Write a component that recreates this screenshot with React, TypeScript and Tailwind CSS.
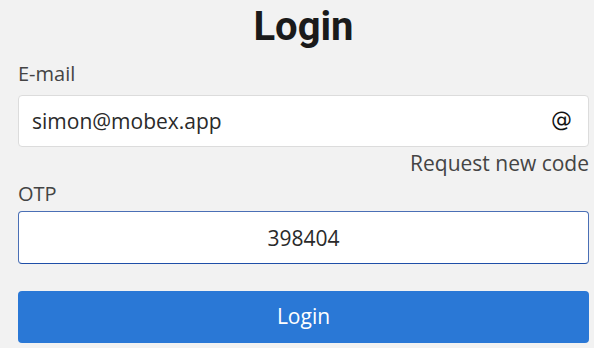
import React, { useState } from 'react';

export default function App() {
    const [email, setEmail] = useState('simon@mobex.app');
    const [otp, setOtp] = useState('398404');

    return (
        <div className="min-h-screen bg-[#f2f2f2] pr-[5px] pl-[18px] font-['Open_Sans',sans-serif] text-[#333]">
            <div className="w-[571px]">
                <h1 className="pt-[3px] text-center font-['Roboto',sans-serif] text-[40px] leading-[48px] font-bold text-[#1a1a1a]">Login</h1>

                <label className="mt-[10px] block text-[20px] leading-[26px] text-[#444]">E-mail</label>
                <div className="relative mt-[8px]">
                    <input
                        type="email"
                        value={email}
                        onChange={(e) => setEmail(e.target.value)}
                        className="h-[52px] w-full rounded-[4px] border border-[#dcdcdc] bg-white pr-[44px] pl-[13px] text-[21px] text-[#2a2a2a] outline-none"
                    />
                    <span className="absolute top-1/2 right-[17px] -translate-y-1/2 font-['DejaVu_Sans',sans-serif] text-[21px] text-[#111]">@</span>
                </div>
                <div className="mt-[2px] text-right text-[21px] leading-[28px] text-[#444]">Request new code</div>

                <label className="mt-[4px] block text-[20px] leading-[26px] text-[#444]">OTP</label>
                <input
                    type="text"
                    value={otp}
                    onChange={(e) => setOtp(e.target.value)}
                    className="mt-[4px] block h-[53px] w-full rounded-[4px] border border-[#4a6fb5] border-b-[#1f4fa8] bg-white text-center text-[21px] text-[#2a2a2a] outline-none"
                />

                <button className="mt-[27px] block h-[52px] w-full rounded-[4px] bg-[#2a78d6] text-[21px] text-white">Login</button>
            </div>
        </div>
    );
}
